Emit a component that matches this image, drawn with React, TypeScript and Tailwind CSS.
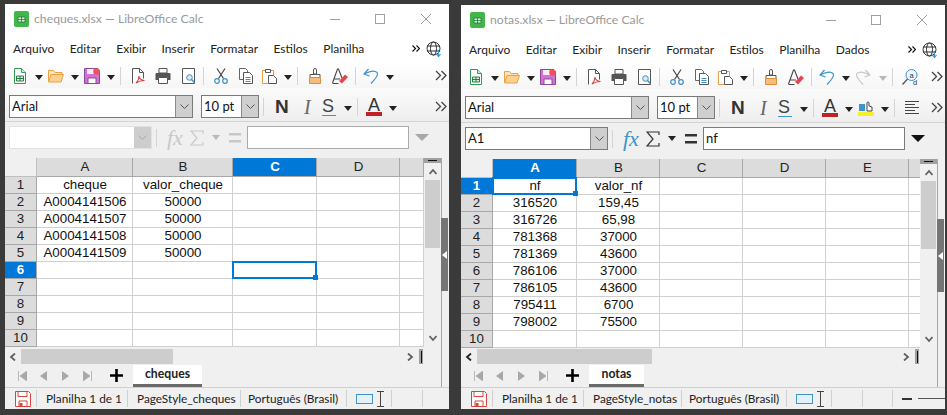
import type { ReactNode } from 'react'

const ui = 'font-["Lato",sans-serif]'

function Caret({ className = '', light = false }: { className?: string; light?: boolean }) {
  return (
    <svg width="8" height="5" viewBox="0 0 8 5" className={`shrink-0 ${className}`}>
      <path d="M0 0h8L4 5z" fill={light ? '#b8b8b8' : '#222'} />
    </svg>
  )
}

function Sep({ className = '' }: { className?: string }) {
  return <div className={`h-[18px] w-px shrink-0 bg-[#d4d4d4] ${className}`} />
}

function DocIcon({ className = '' }: { className?: string }) {
  return (
    <svg width="12" height="16" viewBox="0 0 12 16" className={`shrink-0 ${className}`}>
      <path d="M.5.5h7l4 4v11H.5z" fill="#fff" stroke="#2f9e54" />
      <path d="M7.5.5v4h4" fill="#c9ecd4" stroke="#2f9e54" />
      <path d="M2.5 8h7v5h-7z" fill="#d5f0dc" stroke="#1d6d39" strokeWidth=".9" />
      <path d="M6 8v5M2.5 10.5h7" stroke="#1d6d39" strokeWidth=".9" />
    </svg>
  )
}

function FolderIcon({ className = '' }: { className?: string }) {
  return (
    <svg width="16" height="14" viewBox="0 0 16 14" className={`shrink-0 ${className}`}>
      <path d="M.5 13V1.5h5l1.500 2h7v2" fill="#fbe3bf" stroke="#e9a243" />
      <path d="M.5 13l2.500-7.500h12.500L13 13z" fill="#fcd08f" stroke="#e9a243" />
    </svg>
  )
}

function SaveIcon({ className = '' }: { className?: string }) {
  return (
    <svg width="16" height="16" viewBox="0 0 16 16" className={`shrink-0 ${className}`}>
      <path d="M.5.500h13l2 2v13H.5z" fill="#d56fd6" stroke="#8a4a9c" />
      <path d="M3 1h8v5H3z" fill="#f8eaf9" />
      <path d="M4 10h8v5.500H4z" fill="#fff" stroke="#8a4a9c" />
      <circle cx="12.500" cy="3.500" r="3.300" fill="#e8555a" />
    </svg>
  )
}

function PdfIcon({ className = '' }: { className?: string }) {
  return (
    <svg width="13" height="16" viewBox="0 0 13 16" className={`shrink-0 ${className}`}>
      <path d="M.5 15.500V.5h7l4 4v6" fill="#fff" stroke="#555" />
      <path d="M7.500.5v4h4" fill="none" stroke="#555" />
      <path d="M4 15c2-2 3-5 3-7 0 3 2 4 5.500 4.500C9 12.500 6 13.500 4 15z" fill="none" stroke="#d9443f" strokeWidth="1.100" />
    </svg>
  )
}

function PrintIcon({ className = '' }: { className?: string }) {
  return (
    <svg width="16" height="16" viewBox="0 0 16 16" className={`shrink-0 ${className}`}>
      <path d="M4 .5h8V5H4z" fill="#fff" stroke="#555" />
      <path d="M1.500 5h13a1 1 0 011 1v6h-3V9h-9v3H.5V6a1 1 0 011-1z" fill="#555" />
      <path d="M3.500 9.500h9v6h-9z" fill="#fff" stroke="#555" />
    </svg>
  )
}

function PreviewIcon({ className = '' }: { className?: string }) {
  return (
    <svg width="13" height="16" viewBox="0 0 13 16" className={`shrink-0 ${className}`}>
      <path d="M.5.5h12v15H.5z" fill="#fff" stroke="#555" />
      <circle cx="7.500" cy="9.500" r="2.800" fill="#d8ebf7" stroke="#3f8fc4" />
      <path d="M9.500 11.500l3 3" stroke="#3f8fc4" strokeWidth="1.500" />
    </svg>
  )
}

function CutIcon({ className = '' }: { className?: string }) {
  return (
    <svg width="14" height="16" viewBox="0 0 14 16" className={`shrink-0 ${className}`}>
      <path d="M3 .5l6.500 10M11 .5L4.500 10.500" stroke="#444" strokeWidth="1.200" fill="none" />
      <circle cx="3" cy="13" r="2.300" fill="none" stroke="#3f8fc4" strokeWidth="1.200" />
      <circle cx="11" cy="13" r="2.300" fill="none" stroke="#3f8fc4" strokeWidth="1.200" />
    </svg>
  )
}

function CopyIcon({ className = '' }: { className?: string }) {
  return (
    <svg width="14" height="16" viewBox="0 0 14 16" className={`shrink-0 ${className}`}>
      <path d="M.5.5h6l2 2v9h-8z" fill="#fff" stroke="#666" />
      <path d="M4.500 4.500h6l3 3v8h-9z" fill="#fff" stroke="#555" />
      <path d="M6.500 9.500h5M6.500 11.500h5M6.500 13.500h5" stroke="#3f8fc4" />
    </svg>
  )
}

function PasteIcon({ className = '' }: { className?: string }) {
  return (
    <svg width="15" height="16" viewBox="0 0 15 16" className={`shrink-0 ${className}`}>
      <path d="M.5 2.500h11v13H.5z" fill="#fff" stroke="#e2a04a" />
      <path d="M3.500 1.500h5v3h-5z" fill="#fff" stroke="#555" />
      <path d="M6.500 7.500h5l3 3v5h-8z" fill="#fff" stroke="#555" />
    </svg>
  )
}

function BrushIcon({ className = '' }: { className?: string }) {
  return (
    <svg width="12" height="16" viewBox="0 0 12 16" className={`shrink-0 ${className}`}>
      <path d="M4.500 6V2a1.500 1.500 0 013 0v4z" fill="#fff" stroke="#555" />
      <path d="M1 6.500h10v3H1z" fill="#fff" stroke="#555" />
      <path d="M.5 9.500h11v6H.5z" fill="#f6bd7c" stroke="#e08f38" />
    </svg>
  )
}

function ClearIcon({ className = '' }: { className?: string }) {
  return (
    <svg width="16" height="16" viewBox="0 0 16 16" className={`shrink-0 ${className}`}>
      <path d="M.5 15L5.500 1h1L10 10M2 11h6" fill="none" stroke="#444" strokeWidth="1.100" />
      <path d="M7 13l6-6.500 3 2.500-6 6.500z" fill="#e2474f" />
      <path d="M.5 15.500h6" stroke="#444" />
    </svg>
  )
}

function UndoIcon({ className = '', disabled = false, flip = false }: { className?: string; disabled?: boolean; flip?: boolean }) {
  return (
    <svg width="16" height="16" viewBox="0 0 16 16" className={`shrink-0 ${className} ${flip ? '-scale-x-100' : ''}`}>
      <path
        d="M5.500 1L1 6l5.500 2M1.500 6C7 3 12 2.500 14 4.500c2 2.500-2 7-6 11"
        fill="none"
        stroke={disabled ? '#c6c6c6' : '#3d94c9'}
        strokeWidth="1.200"
      />
    </svg>
  )
}

function FindIcon({ className = '' }: { className?: string }) {
  return (
    <svg width="16" height="16" viewBox="0 0 16 16" className={`shrink-0 ${className}`}>
      <circle cx="9.500" cy="6" r="5.500" fill="#eef6fb" stroke="#3d94c9" />
      <path d="M5.500 10L.5 15.500" stroke="#555" strokeWidth="1.300" />
      <text x="9.500" y="8.500" fontSize="7.500" textAnchor="middle" fill="#333" fontFamily="Liberation Sans">a</text>
      <text x="13" y="15.500" fontSize="7.500" textAnchor="middle" fill="#333" fontFamily="Liberation Sans">d</text>
    </svg>
  )
}

function More({ className = '' }: { className?: string }) {
  return (
    <svg width="12" height="11" viewBox="0 0 12 11" className={`shrink-0 ${className}`}>
      <path d="M1 1l4.500 4.500L1 10M6.500 1L11 5.500 6.500 10" fill="none" stroke="#444" strokeWidth="1.300" />
    </svg>
  )
}

function Globe() {
  return (
    <svg width="16" height="16" viewBox="0 0 16 16" className="shrink-0">
      <circle cx="7.500" cy="7.500" r="6.500" fill="none" stroke="#333" />
      <ellipse cx="7.500" cy="7.500" rx="3" ry="6.500" fill="none" stroke="#333" />
      <path d="M1 5h13M1 10h13" stroke="#333" />
      <path d="M12.500 9v6M10.500 13l2 2.500 2-2.500" fill="none" stroke="#3d94c9" strokeWidth="1.200" />
    </svg>
  )
}

function DropBtn() {
  return (
    <div className="flex h-full w-[17px] shrink-0 items-center justify-center border-l border-[#8a8a8a] bg-[#cfcfcf]">
      <svg width="9" height="5" viewBox="0 0 9 5">
        <path d="M.5.5l4 4 4-4" fill="none" stroke="#555" />
      </svg>
    </div>
  )
}

function Combo({ text, className = '', disabled = false }: { text: string; className?: string; disabled?: boolean }) {
  return (
    <div className={`flex h-[23px] shrink-0 items-center border bg-white ${disabled ? 'border-[#e2e2e2]' : 'border-[#7a7a7a]'} ${className}`}>
      <span className="flex-1 truncate pl-[2px] text-[13px] text-[#111]">{text}</span>
      {disabled ? (
        <div className="flex h-full w-[17px] items-center justify-center bg-[#cdcdcd]">
          <svg width="9" height="5" viewBox="0 0 9 5">
            <path d="M.5.5l4 4 4-4" fill="none" stroke="#aaa" />
          </svg>
        </div>
      ) : (
        <DropBtn />
      )}
    </div>
  )
}

function Header({ title, extraMenu }: { title: string; extraMenu?: string }) {
  const menus = ['Arquivo', 'Editar', 'Exibir', 'Inserir', 'Formatar', 'Estilos', 'Planilha']
  if (extraMenu) menus.push(extraMenu)
  return (
    <>
      <div className="flex h-[30px] shrink-0 items-center bg-white pl-[9px]">
        <svg width="15" height="16" viewBox="0 0 15 16" className="shrink-0">
          <rect width="15" height="16" rx="2" fill="#43b649" />
          <path d="M4 6h7v5H4z" fill="#d8f3da" stroke="#1d7a35" strokeWidth=".8" />
          <path d="M7.500 6v5M4 8.500h7" stroke="#1d7a35" strokeWidth=".8" />
        </svg>
        <span className="ml-[5px] text-[12.250px] text-[#9a9a9a]">{title}</span>
        <div className="ml-auto flex items-center pr-[18px]">
          <div className="h-px w-[10px] bg-[#a0a0a0]" />
          <div className="ml-[35px] size-[10px] border border-[#a0a0a0]" />
          <svg width="10" height="10" viewBox="0 0 10 10" className="ml-[36px]">
            <path d="M0 0l10 10M10 0L0 10" stroke="#a0a0a0" />
          </svg>
        </div>
      </div>
      <div className="flex h-[29px] shrink-0 items-center bg-white pl-[8px] pr-[7px] text-[12px] text-[#222]">
        <div className="flex gap-[15.500px]">
          {menus.map((m) => (
            <span key={m}>{m}</span>
          ))}
        </div>
        <svg width="8" height="7" viewBox="0 0 8 7" className="ml-auto mr-[6px]">
          <path d="M.5.5l3 3-3 3M4.500.5l3 3-3 3" fill="none" stroke="#111" strokeWidth="1.200" />
        </svg>
        <Globe />
      </div>
    </>
  )
}

function Toolbar({ children }: { children: ReactNode }) {
  return (
    <div className="flex h-[25px] shrink-0 items-center bg-gradient-to-b from-white to-[#f6f6f6]">
      <DocIcon className="ml-[9px]" />
      <Caret className="ml-[9px] mt-[4px]" />
      <FolderIcon className="ml-[5px]" />
      <Caret className="ml-[7px] mt-[4px]" />
      <SaveIcon className="ml-[5px]" />
      <Caret className="ml-[7px] mt-[4px]" />
      <Sep className="ml-[5px]" />
      <PdfIcon className="ml-[11px]" />
      <PrintIcon className="ml-[10px]" />
      <PreviewIcon className="ml-[11px]" />
      <Sep className="ml-[8px]" />
      <CutIcon className="ml-[10px]" />
      <CopyIcon className="ml-[11px]" />
      <PasteIcon className="ml-[9px]" />
      <Caret className="ml-[7px] mt-[4px]" />
      <Sep className="ml-[5px]" />
      <BrushIcon className="ml-[11px]" />
      <ClearIcon className="ml-[11px]" />
      <Sep className="ml-[7px]" />
      <UndoIcon className="ml-[7px]" />
      <Caret className="ml-[7px] mt-[4px]" />
      {children}
      <More className="ml-auto mr-[2px]" />
    </div>
  )
}

function FontBar({ children }: { children: ReactNode }) {
  return (
    <div className="flex h-[34px] shrink-0 items-center border-b border-[#d4d4d4] bg-gradient-to-b from-[#fbfbfb] to-[#eeeeee] pb-[3px] pt-[7px]">
      <Combo text="Arial" className="ml-[4px] w-[184px]" />
      <Combo text="10 pt" className="ml-[8px] w-[58px]" />
      <Sep className="ml-[4px]" />
      <span className='ml-[11px] w-[13px] font-["Liberation_Sans",sans-serif] text-[19px] font-bold leading-none text-[#333]'>N</span>
      <span className='ml-[16px] w-[8px] font-["Liberation_Serif",serif] text-[20px] italic leading-none text-[#666]'>I</span>
      <span className='ml-[10px] w-[14px] border-b-[1.500px] border-[#3d94c9] font-["Liberation_Sans",sans-serif] text-[18px] leading-[17px] text-[#444]'>S</span>
      <Caret className="ml-[8px] mt-[4px]" />
      <Sep className="ml-[5px]" />
      <div className='ml-[8px] flex w-[16px] flex-col items-center font-["Liberation_Sans",sans-serif] text-[18px] leading-[14px] text-[#333]'>
        A<div className="h-[4px] w-full bg-[#c22026]" />
      </div>
      <Caret className="ml-[7px] mt-[4px]" />
      {children}
      <More className="ml-auto mr-[2px]" />
    </div>
  )
}

function FormulaBar({ active, name, value, inputWidth }: { active: boolean; name: string; value: string; inputWidth: string }) {
  const stroke = active ? '#333' : '#c8c8c8'
  return (
    <div className="flex h-[36px] shrink-0 items-center bg-[#f0f0f0] pb-[9px] pt-[4px]">
      <Combo text={name} className="ml-[4px] w-[143px]" disabled={!active} />
      <Sep className="ml-[4px]" />
      <span className={`ml-[10px] w-[16px] font-["Liberation_Serif",serif] text-[22px] italic leading-none ${active ? 'text-[#3d94c9]' : 'text-[#c8c8c8]'}`}>fx</span>
      <svg width="14" height="16" viewBox="0 0 14 16" className="ml-[7px] shrink-0">
        <path d="M13 4V1H1l6 7-6 7h12v-3" fill="none" stroke={stroke} strokeWidth="1.200" />
      </svg>
      <Caret className="ml-[8px]" light={!active} />
      <svg width="12" height="10" viewBox="0 0 12 10" className="ml-[9px] shrink-0">
        <path d="M0 0h12v2.500H0zM0 7h12v2.500H0z" fill={stroke} />
      </svg>
      <div className={`ml-[6px] flex h-[23px] items-center border bg-white pl-[2px] text-[13px] text-[#111] ${inputWidth} ${active ? 'border-[#7a7a7a]' : 'border-[#ababab]'}`}>
        {value}
      </div>
      <svg width="14" height="7" viewBox="0 0 14 7" className="ml-[6px] shrink-0">
        <path d="M0 0h14L7 7z" fill={active ? '#111' : '#a8a8a8'} />
      </svg>
    </div>
  )
}

type Selected = { col: number; row: number }

function Sheet({
  colClass,
  columns,
  rows,
  selected,
}: {
  colClass: string
  columns: string[]
  rows: string[][]
  selected: Selected
}) {
  const rowNums = [1, 2, 3, 4, 5, 6, 7, 8, 9, 10]
  return (
    <div className={`grid grid-rows-[19px] auto-rows-[17px] font-["Liberation_Sans",sans-serif] text-[13.330px] ${colClass}`}>
      <div className="border-b border-r border-[#c0c0c0] bg-[#f0f0f0]" />
      {columns.map((c, i) => (
        <div
          key={i}
          className={`flex items-center justify-center border-b border-r border-[#a8a8a8] pl-px ${
            i === selected.col ? 'bg-[#0078d7] font-bold text-white' : 'bg-[#dcdcdc] text-[#222]'
          }`}
        >
          {c}
        </div>
      ))}
      {rowNums.map((n, r) => [
        <div
          key={`h${n}`}
          className={`flex items-center justify-center border-b border-r border-[#a8a8a8] ${
            r === selected.row ? 'bg-[#0078d7] font-bold text-white' : 'bg-[#dcdcdc] text-[#222]'
          }`}
        >
          {n}
        </div>,
        ...columns.map((_, i) => {
          const isSel = i === selected.col && r === selected.row
          return (
            <div
              key={`${i}-${n}`}
              className="relative flex items-center justify-center border-b border-r border-[#d0d0d0] bg-white pl-px text-[#111]"
            >
              {rows[r]?.[i] ?? ''}
              {isSel && (
                <div className="absolute -inset-px z-10 border-2 border-[#0078d7]">
                  <div className="absolute -bottom-[3px] -right-[3px] size-[5px] bg-[#0078d7]" />
                </div>
              )}
            </div>
          )
        }),
      ])}
    </div>
  )
}

function Arrow({ dir, className = '', dark = false }: { dir: 'l' | 'r' | 'u' | 'd'; className?: string; dark?: boolean }) {
  const d = { l: 'M6 .5L2 4l4 3.500', r: 'M2 .5L6 4 2 7.500', u: 'M.5 6L4 2l3.500 4', d: 'M.5 2L4 6l3.500-4' }[dir]
  return (
    <svg width="8" height="8" viewBox="0 0 8 8" className={`shrink-0 ${className}`}>
      <path d={d} fill="none" stroke={dark ? '#222' : '#606060'} strokeWidth="1.800" />
    </svg>
  )
}

function VScroll() {
  return (
    <div className="flex w-[17px] shrink-0 flex-col items-center bg-[#f0f0f0]">
      <div className="flex h-[5px] w-full items-center justify-center bg-[#a0a0a0]">
        <div className="h-px w-[9px] bg-[#111]" />
      </div>
      <div className="flex h-[17px] items-center">
        <Arrow dir="u" />
      </div>
      <div className="h-[68px] w-[15px] bg-[#cdcdcd]" />
      <Arrow dir="d" className="mb-[5px] mt-auto" />
    </div>
  )
}

function SheetNav({ name, tabWidth }: { name: string; tabWidth: string }) {
  return (
    <div className="flex h-[23px] shrink-0 items-start bg-[#f0f0f0] pl-[13px]">
      <div className="flex h-full items-center">
        <svg width="9" height="10" viewBox="0 0 9 10" className="shrink-0">
          <path d="M.5 0v10M9 0v10L2 5z" fill="#a8a8a8" stroke="#a8a8a8" strokeWidth=".8" />
        </svg>
        <svg width="7" height="10" viewBox="0 0 7 10" className="ml-[13px] shrink-0">
          <path d="M7 0v10L0 5z" fill="#a8a8a8" />
        </svg>
        <svg width="7" height="10" viewBox="0 0 7 10" className="ml-[15px] shrink-0">
          <path d="M0 0v10l7-5z" fill="#a8a8a8" />
        </svg>
        <svg width="9" height="10" viewBox="0 0 9 10" className="ml-[14px] shrink-0">
          <path d="M8.500 0v10M0 0v10l7-5z" fill="#a8a8a8" stroke="#a8a8a8" strokeWidth=".8" />
        </svg>
        <svg width="13" height="13" viewBox="0 0 13 13" className="ml-[18px] shrink-0">
          <path d="M6.500 0v13M0 6.500h13" stroke="#000" strokeWidth="2.600" />
        </svg>
      </div>
      <div className={`ml-[10px] mt-px flex h-[22px] items-center justify-center border-b-[3px] border-[#6a6a6a] bg-white text-[12.250px] font-bold text-[#222] ${tabWidth}`}>
        {name}
      </div>
    </div>
  )
}

function StatusBar({
  style,
  styleWidth,
  langWidth,
  trailing,
}: {
  style: string
  styleWidth: string
  langWidth: string
  trailing?: ReactNode
}) {
  const seg = 'h-[17px] w-px shrink-0 bg-[#d0d0d0]'
  return (
    <div className="flex h-[22px] shrink-0 items-center overflow-hidden border-t border-[#cfcfcf] bg-[#f0f0f0] text-[11.800px] text-[#222]">
      <svg width="16" height="16" viewBox="0 0 16 16" className="ml-[10px] shrink-0">
        <path d="M.5.500h13l2 2v13H.5z" fill="#fff" stroke="#d9443f" />
        <path d="M3 1v4.500h9V1M4 15.500V10h8v5.500" fill="none" stroke="#d9443f" />
        <path d="M4.500 12h3v3.500h-3z" fill="#d9443f" />
      </svg>
      <div className={`ml-[5px] ${seg}`} />
      <span className="ml-[9px] w-[81px] shrink-0 whitespace-nowrap">Planilha 1 de 1</span>
      <div className={seg} />
      <span className={`ml-[9px] shrink-0 whitespace-nowrap ${styleWidth}`}>{style}</span>
      <div className={seg} />
      <span className={`ml-[7px] shrink-0 whitespace-nowrap ${langWidth}`}>Português (Brasil)</span>
      <div className={seg} />
      <div className="ml-[9px] h-[10px] w-[17px] shrink-0 border border-[#3d94c9] bg-[#e4f1fa]" />
      <svg width="9" height="16" viewBox="0 0 9 16" className="ml-[3px] shrink-0">
        <path d="M1 .5h7M1 15.500h7M4.500.5v15" stroke="#444" />
      </svg>
      <div className={`ml-[6px] ${seg}`} />
      <div className={`ml-[30px] ${seg}`} />
      {trailing}
    </div>
  )
}

function Window({
  title,
  extraMenu,
  toolbarExtra,
  fontExtra,
  active,
  name,
  value,
  inputWidth,
  colClass,
  columns,
  rows,
  selected,
  thumbWidth,
  hscrollClass,
  sheet,
  tabWidth,
  style,
  styleWidth,
  langWidth,
  trailing,
  width,
  top,
}: {
  title: string
  extraMenu?: string
  toolbarExtra?: ReactNode
  fontExtra?: ReactNode
  active: boolean
  name: string
  value: string
  inputWidth: string
  colClass: string
  columns: string[]
  rows: string[][]
  selected: Selected
  thumbWidth: string
  hscrollClass: string
  sheet: string
  tabWidth: string
  style: string
  styleWidth: string
  langWidth: string
  trailing?: ReactNode
  width: string
  top: string
}) {
  return (
    <div className={`flex shrink-0 flex-col bg-white ${ui} ${width} ${top}`}>
      <Header title={title} extraMenu={extraMenu} />
      <Toolbar>{toolbarExtra}</Toolbar>
      <FontBar>{fontExtra}</FontBar>
      <FormulaBar active={active} name={name} value={value} inputWidth={inputWidth} />
      <div className="flex min-h-0 flex-1 bg-[#f0f0f0]">
        <div className="flex min-w-0 flex-1 flex-col">
          <div className="flex min-h-0 flex-1">
            <div className="min-w-0 flex-1 overflow-hidden">
              <Sheet colClass={colClass} columns={columns} rows={rows} selected={selected} />
            </div>
            <VScroll />
          </div>
          <div className={`flex shrink-0 items-center bg-[#f0f0f0] pr-[18px] ${hscrollClass}`}>
            <Arrow dir="l" className="ml-[4px]" dark={active} />
            <div className={`ml-[4px] h-full bg-[#cdcdcd] ${thumbWidth}`} />
            <Arrow dir="r" className="ml-auto" />
            <div className="ml-[5px] flex h-full w-[4px] items-center justify-center bg-[#a0a0a0]">
              <div className="h-[12px] w-px bg-[#111]" />
            </div>
          </div>
          <SheetNav name={sheet} tabWidth={tabWidth} />
        </div>
        <div className="relative w-[8px] shrink-0 border-l border-[#a8a8a8] bg-[#f0f0f0]">
          <div className="absolute -left-px top-[60px] flex h-[73px] w-[7px] items-center justify-center bg-[#757575]">
            <svg width="5" height="8" viewBox="0 0 5 8">
              <path d="M5 0v8L0 4z" fill="#fff" />
            </svg>
          </div>
        </div>
      </div>
      <StatusBar style={style} styleWidth={styleWidth} langWidth={langWidth} trailing={trailing} />
    </div>
  )
}

export default function App() {
  return (
    <div className="flex h-[415px] w-[947px] gap-[12px] overflow-hidden bg-[#3a3a3a] pb-[6px] pl-[5px]">
      <Window
        title="cheques.xlsx — LibreOffice Calc"
        active={false}
        name=""
        value=""
        inputWidth="w-[162px]"
        colClass="grid-cols-[32px_96px_100px_84px_83px_24px]"
        columns={['A', 'B', 'C', 'D', '']}
        rows={[
          ['cheque', 'valor_cheque'],
          ['A0004141506', '50000'],
          ['A0004141507', '50000'],
          ['A0004141508', '50000'],
          ['A0004141509', '50000'],
        ]}
        selected={{ col: 2, row: 5 }}
        thumbWidth="w-[152px]"
        hscrollClass="h-[17px] pt-[2px]"
        sheet="cheques"
        tabWidth="w-[69px]"
        style="PageStyle_cheques"
        styleWidth="w-[103px]"
        langWidth="w-[98px]"
        width="w-[444px]"
        top="mt-[4px]"
      />
      <Window
        title="notas.xlsx — LibreOffice Calc"
        extraMenu="Dados"
        toolbarExtra={
          <>
            <UndoIcon className="ml-[5px]" disabled flip />
            <Caret className="ml-[8px] mt-[4px]" light />
            <Sep className="ml-[5px]" />
            <FindIcon className="ml-[9px]" />
          </>
        }
        fontExtra={
          <>
            <div className="ml-[5px] flex w-[16px] shrink-0 flex-col">
              <svg width="16" height="12" viewBox="0 0 16 12">
                <path d="M1 11V4h6v7z" fill="#3d94c9" />
                <path d="M9 11V3a1 1 0 012 0v3l3 1v4z" fill="#fff" stroke="#444" />
              </svg>
              <div className="h-[4px] bg-[#f7ee2a]" />
            </div>
            <Caret className="ml-[7px] mt-[4px]" />
            <Sep className="ml-[5px]" />
            <svg width="14" height="13" viewBox="0 0 14 13" className="ml-[10px] shrink-0">
              <path d="M0 .5h14M0 3.500h10M0 6.500h14M0 9.500h10M0 12.500h14" stroke="#444" />
            </svg>
          </>
        }
        active
        name="A1"
        value="nf"
        inputWidth="w-[202px]"
        colClass="grid-cols-[32px_84px_83px_83px_83px_83px_13px]"
        columns={['A', 'B', 'C', 'D', 'E', '']}
        rows={[
          ['nf', 'valor_nf'],
          ['316520', '159,45'],
          ['316726', '65,98'],
          ['781368', '37000'],
          ['781369', '43600'],
          ['786106', '37000'],
          ['786105', '43600'],
          ['795411', '6700'],
          ['798002', '75500'],
        ]}
        selected={{ col: 0, row: 0 }}
        thumbWidth="w-[175px]"
        hscrollClass="h-[16px] pt-px"
        sheet="notas"
        tabWidth="w-[55px]"
        style="PageStyle_notas"
        styleWidth="w-[88px]"
        langWidth="w-[97px]"
        trailing={
          <>
            <div className="ml-[29px] h-[17px] w-px shrink-0 bg-[#d0d0d0]" />
            <div className="ml-[9px] h-[2px] w-[10px] shrink-0 bg-[#333]" />
            <div className="ml-[6px] h-px w-[30px] shrink-0 bg-[#555]" />
          </>
        }
        width="w-[484px]"
        top="mt-[5px]"
      />
    </div>
  )
}
